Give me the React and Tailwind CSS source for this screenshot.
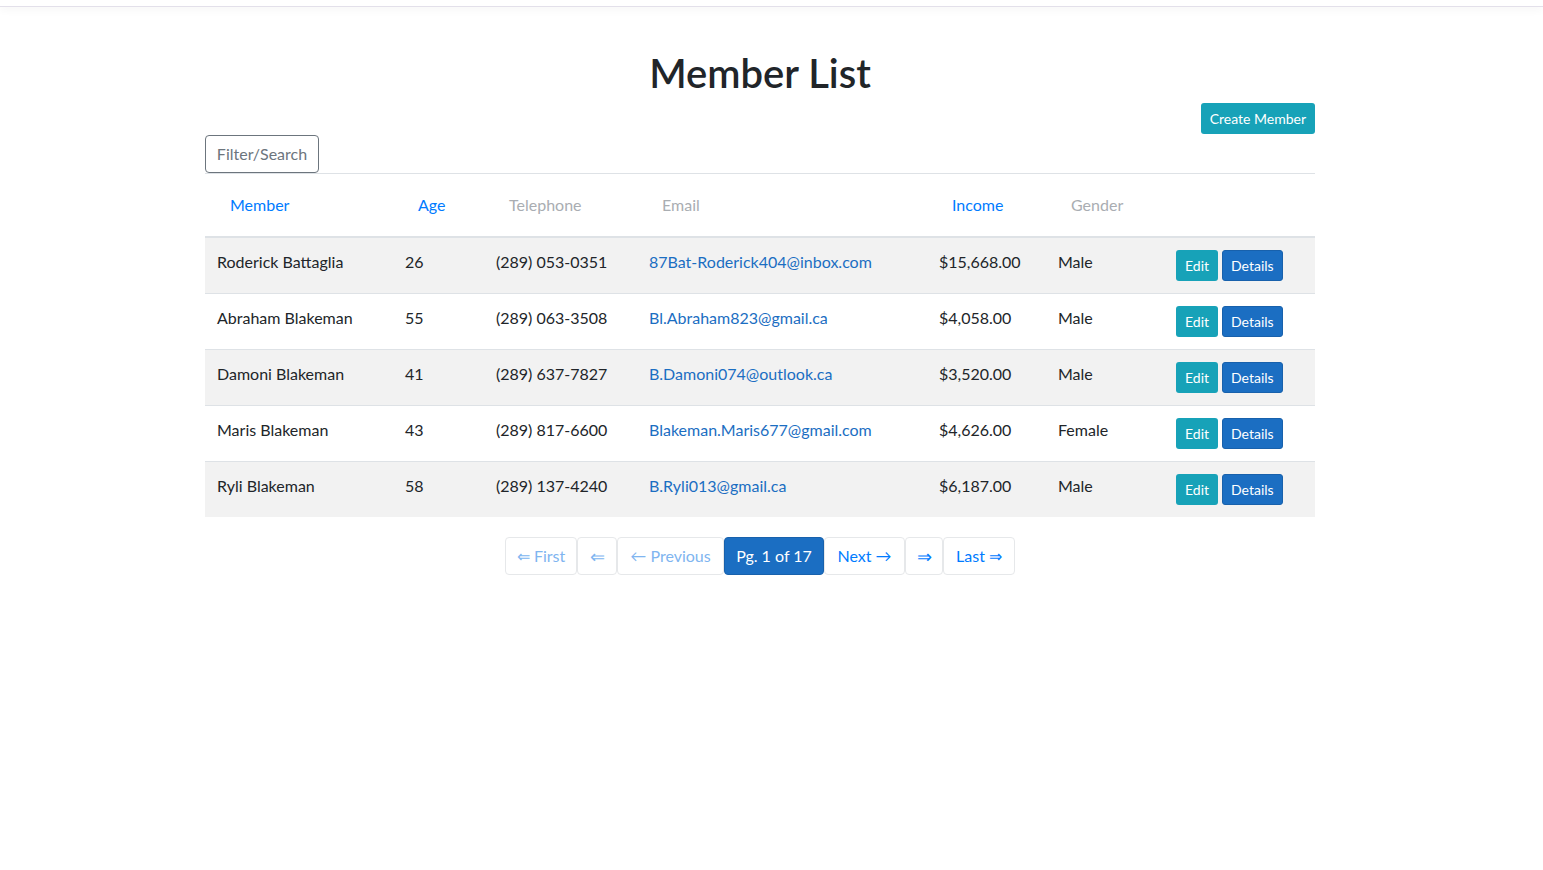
import React from "react";

const rows = [
  ["Roderick Battaglia", "26", "(289) 053-0351", "87Bat-Roderick404@inbox.com", "$15,668.00", "Male"],
  ["Abraham Blakeman", "55", "(289) 063-3508", "Bl.Abraham823@gmail.ca", "$4,058.00", "Male"],
  ["Damoni Blakeman", "41", "(289) 637-7827", "B.Damoni074@outlook.ca", "$3,520.00", "Male"],
  ["Maris Blakeman", "43", "(289) 817-6600", "Blakeman.Maris677@gmail.com", "$4,626.00", "Female"],
  ["Ryli Blakeman", "58", "(289) 137-4240", "B.Ryli013@gmail.ca", "$6,187.00", "Male"],
];

const widths = ["w-[188px]", "w-[91px]", "w-[153px]", "w-[290px]", "w-[119px]", "w-[118px]", "w-[151px]"];

function Th({ children, active, w }) {
  return (
    <th className={`${w} p-3 text-left font-normal align-bottom`}>
      {children ? (
        <span className={`inline-block border border-transparent px-3 py-[6px] leading-6 ${active ? "text-[#007bff]" : "text-[#a9adb2]"}`}>
          {children}
        </span>
      ) : (
        <span className="inline-block py-[6px] leading-6 border border-transparent">&nbsp;</span>
      )}
    </th>
  );
}

export default function App() {
  return (
    <div className="min-h-[870px] bg-white text-[#212529]" style={{ fontFamily: "Lato, 'Open Sans', sans-serif" }}>
      <div className="h-[7px] border-b border-[#e3e0ea] shadow-[0_3px_8px_rgba(0,0,0,0.04)]" />
      <div className="ml-[205px] w-[1110px]">
        <h1 className="mt-[42px] text-center text-[40px] font-semibold leading-[48px] text-[#212529]">Member List</h1>
        <div className="flex justify-end mt-[6px]">
          <button className="h-[31px] rounded-[3px] bg-[#17a2b8] px-[9px] text-[14px] leading-[21px] text-white">Create Member</button>
        </div>
        <div className="mt-[1px]">
          <button className="h-[38px] w-[114px] rounded-[4px] border border-[#6c757d] text-[16px] text-[#6c757d]">Filter/Search</button>
        </div>
        <table className="w-full border-collapse text-[16px] leading-6">
          <thead>
            <tr className="border-t border-[#dee2e6] border-b-2 border-b-[#dee2e6]">
              <Th w={widths[0]} active>Member</Th>
              <Th w={widths[1]} active>Age</Th>
              <Th w={widths[2]}>Telephone</Th>
              <Th w={widths[3]}>Email</Th>
              <Th w={widths[4]} active>Income</Th>
              <Th w={widths[5]}>Gender</Th>
              <Th w={widths[6]} />
            </tr>
          </thead>
          <tbody>
            {rows.map((r, i) => (
              <tr key={i} className={`border-t border-[#dee2e6] ${i % 2 === 0 ? "bg-[#f2f2f2]" : "bg-white"}`}>
                <td className="p-3 align-top">{r[0]}</td>
                <td className="p-3 align-top">{r[1]}</td>
                <td className="p-3 align-top">{r[2]}</td>
                <td className="p-3 align-top text-[#1b6ec2]">{r[3]}</td>
                <td className="p-3 align-top">{r[4]}</td>
                <td className="p-3 align-top">{r[5]}</td>
                <td className="p-3 align-top">
                  <div className="flex gap-[4px]">
                    <button className="h-[31px] rounded-[3px] bg-[#17a2b8] px-[9px] text-[14px] text-white">Edit</button>
                    <button className="h-[31px] rounded-[3px] border border-[#1861ac] bg-[#1b6ec2] px-[8px] text-[14px] text-white">Details</button>
                  </div>
                </td>
              </tr>
            ))}
          </tbody>
        </table>
        <div className="mt-5 flex justify-center text-[16px]">
          <span className="flex h-[38px] w-[72px] items-center justify-center rounded-[4px] border border-[#e6e8ea] text-[#80b5f0]">⇐ First</span>
          <span className="flex h-[38px] w-[40px] items-center justify-center rounded-[4px] border border-[#e6e8ea] text-[18px] text-[#80b5f0]">⇐</span>
          <span className="flex h-[38px] w-[107px] items-center justify-center rounded-[4px] border border-[#e6e8ea] text-[#80b5f0]">← Previous</span>
          <span className="flex h-[38px] w-[100px] items-center justify-center rounded-[4px] border border-[#1861ac] bg-[#1b6ec2] text-white">Pg. 1 of 17</span>
          <span className="flex h-[38px] w-[81px] items-center justify-center rounded-[4px] border border-[#e6e8ea] text-[#007bff]">Next →</span>
          <span className="flex h-[38px] w-[38px] items-center justify-center rounded-[4px] border border-[#e6e8ea] text-[18px] text-[#007bff]">⇒</span>
          <span className="flex h-[38px] w-[72px] items-center justify-center rounded-[4px] border border-[#e6e8ea] text-[#007bff]">Last ⇒</span>
        </div>
      </div>
    </div>
  );
}
